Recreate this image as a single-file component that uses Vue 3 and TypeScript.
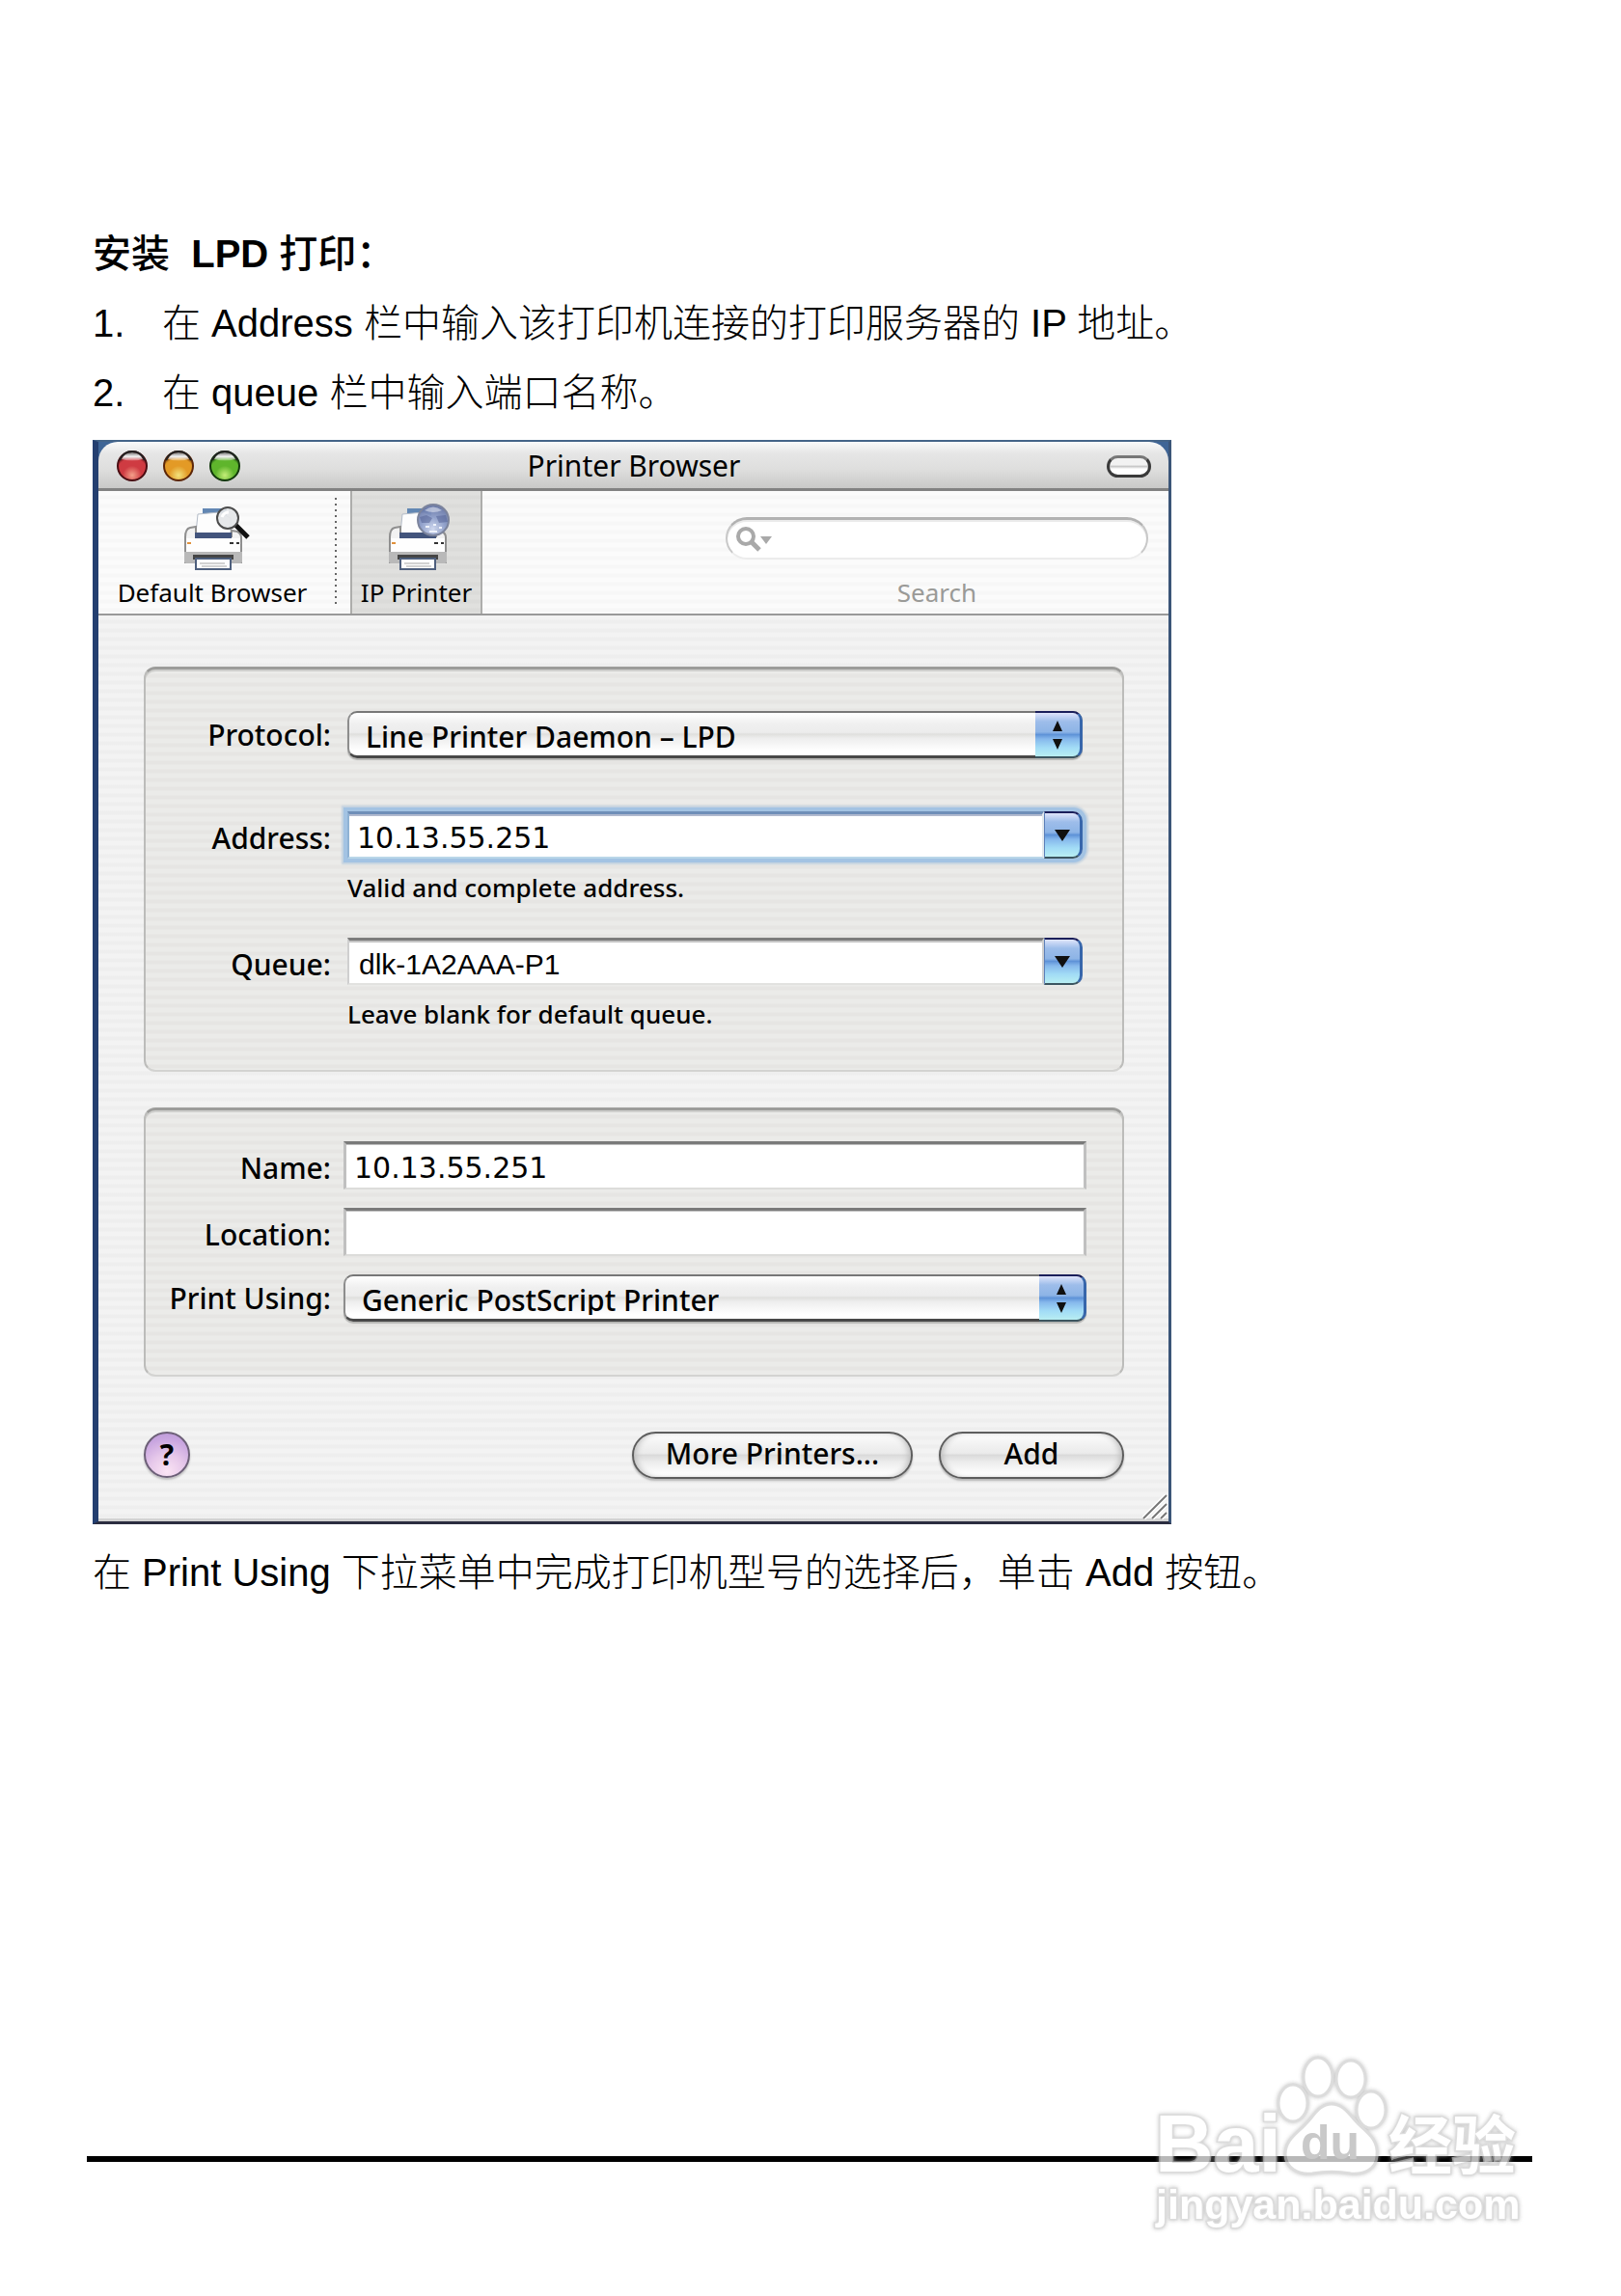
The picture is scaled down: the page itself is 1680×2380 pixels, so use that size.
<script setup lang="ts">
import { ref } from 'vue'

interface Light {
  name: string
  rim: string
  mid: string
  glow: string
}

const lights: Light[] = [
  { name: 'Close', rim: '#4a0d12', mid: '#cf3b42', glow: '#f4a08a' },
  { name: 'Minimize', rim: '#5c2608', mid: '#e39a26', glow: '#f2e27c' },
  { name: 'Zoom', rim: '#12380c', mid: '#5fb52c', glow: '#c4ee78' },
]

const steps: string[] = [
  '在 Address 栏中输入该打印机连接的打印服务器的 IP 地址。',
  '在 queue 栏中输入端口名称。',
]

const search = ref('')
const protocol = ref('lpd')
const address = ref('10.13.55.251')
const queue = ref('dlk-1A2AAA-P1')
const printerName = ref('10.13.55.251')
const location = ref('')
const driver = ref('generic')
</script>

<template>
  <main class="page">
    <h1 class="heading">安装&nbsp; <b>LPD</b> 打印：</h1>
    <ol class="steps">
      <li v-for="(step, i) in steps" :key="i">
        <span class="num">{{ i + 1 }}.</span>
        <span>{{ step }}</span>
      </li>
    </ol>

    <section class="window" aria-label="Printer Browser">
      <header class="titlebar">
        <div class="lights">
          <button v-for="(l, i) in lights" :key="l.name" type="button" class="light" :aria-label="l.name">
            <svg viewBox="0 0 32 32" width="32" height="32">
              <defs>
                <radialGradient :id="'lamp' + i" cx="50%" cy="82%" r="72%">
                  <stop offset="0" :stop-color="l.glow" />
                  <stop offset="0.45" :stop-color="l.mid" />
                  <stop offset="0.8" :stop-color="l.mid" />
                  <stop offset="1" :stop-color="l.rim" />
                </radialGradient>
                <linearGradient :id="'shine' + i" x1="0" y1="0" x2="0" y2="1">
                  <stop offset="0" stop-color="#777" />
                  <stop offset="0.5" stop-color="#f4f4f4" />
                  <stop offset="1" stop-color="#fff" stop-opacity="0.2" />
                </linearGradient>
              </defs>
              <circle cx="16" cy="16" r="15" :fill="`url(#lamp${i})`" :stroke="l.rim" stroke-width="2" />
              <path d="M5 9Q8 2 16 2T27 9Q16 12 5 9Z" :fill="`url(#shine${i})`" />
              <path d="M3 10Q7 1 16 1T29 10" fill="none" stroke="#222" stroke-width="2" />
            </svg>
          </button>
        </div>
        <h2 class="title">Printer Browser</h2>
        <button type="button" class="pill" aria-label="Toggle toolbar"></button>
      </header>

      <div class="toolbar">
        <button type="button" class="tool wide">
          <svg class="tool-icon" viewBox="0 0 70 71" width="70" height="71">
            <path d="M25 2H50V14H25Z" fill="#6287b3" />
            <path d="M20 8L42 6L54 12V28H18Z" fill="#fdfdfd" stroke="#b4bcc8" stroke-width="1" />
            <path d="M7 32Q7 23 12 22L18 21V31H55V25L61 26Q65 28 65 32V58H7Z" fill="#f2f2f2" stroke="#8f8f8f" stroke-width="2" />
            <path d="M17 27H55V33H17Z" fill="#42547c" />
            <path d="M8 33H64V47H8Z" fill="#fefefe" />
            <path d="M6 47H66V57Q66 59 63 59H9Q6 59 6 57Z" fill="#b9b9b9" />
            <path d="M15 50H57V55H15Z" fill="#454545" />
            <path d="M18 54H54V65H18Z" fill="#fdfdfd" stroke="#4e5f7d" stroke-width="2" />
            <path d="M22 59H48M24 62H50" stroke="#d2d2d2" stroke-width="2" />
            <path d="M9 38H13" stroke="#e0913c" stroke-width="2" />
            <path d="M53 38H57M60 38H63" stroke="#333" stroke-width="2" />
            <path d="M59 19L72 32" stroke="#111" stroke-width="5" />
            <circle cx="51" cy="12" r="11" fill="#e4e6e8" fill-opacity="0.92" stroke="#4c4c4c" stroke-width="2" />
            <path d="M45 11Q47 6 52 6" fill="none" stroke="#fff" stroke-width="3" />
          </svg>
          <span>Default Browser</span>
        </button>
        <span class="divider"></span>
        <button type="button" class="tool active" aria-pressed="true">
          <svg class="tool-icon" viewBox="0 0 70 71" width="70" height="71">
            <defs>
              <radialGradient id="globe" cx="50%" cy="80%" r="80%">
                <stop offset="0" stop-color="#cdd6ee" />
                <stop offset="0.5" stop-color="#8a9bc8" />
                <stop offset="1" stop-color="#5f6e9f" />
              </radialGradient>
            </defs>
            <path d="M25 2H50V14H25Z" fill="#6287b3" />
            <path d="M20 8L42 6L54 12V28H18Z" fill="#fdfdfd" stroke="#b4bcc8" stroke-width="1" />
            <path d="M7 32Q7 23 12 22L18 21V31H55V25L61 26Q65 28 65 32V58H7Z" fill="#f2f2f2" stroke="#8f8f8f" stroke-width="2" />
            <path d="M17 27H55V33H17Z" fill="#42547c" />
            <path d="M8 33H64V47H8Z" fill="#fefefe" />
            <path d="M6 47H66V57Q66 59 63 59H9Q6 59 6 57Z" fill="#b9b9b9" />
            <path d="M15 50H57V55H15Z" fill="#454545" />
            <path d="M18 54H54V65H18Z" fill="#fdfdfd" stroke="#4e5f7d" stroke-width="2" />
            <path d="M22 59H48M24 62H50" stroke="#d2d2d2" stroke-width="2" />
            <path d="M9 38H13" stroke="#e0913c" stroke-width="2" />
            <path d="M53 38H57M60 38H63" stroke="#333" stroke-width="2" />
            <circle cx="52" cy="14" r="16" fill="url(#globe)" fill-opacity="0.92" stroke="#7c849c" stroke-width="2" />
            <path d="M38 11L45 9L51 12L48 17L40 17ZM55 10L65 9L67 16L58 17Z" fill="#4f5e92" fill-opacity="0.5" />
            <path d="M43 4Q52 -3 61 4Q52 8 43 4Z" fill="#dde2f0" fill-opacity="0.6" />
            <path d="M44 21H48M52 19H55M58 22H61M48 26H56" stroke="#eef2fb" stroke-width="2" />
          </svg>
          <span>IP Printer</span>
        </button>
        <div class="search">
          <div class="search-box">
            <svg viewBox="0 0 40 28" width="40" height="28">
              <circle cx="10" cy="11" r="8" fill="none" stroke="#a9a9a9" stroke-width="4" />
              <path d="M16 17L24 25" stroke="#a9a9a9" stroke-width="5" />
              <path d="M25 11H37L31 19Z" fill="#a9a9a9" />
            </svg>
            <input id="search" v-model="search" type="text" />
          </div>
          <label for="search">Search</label>
        </div>
      </div>

      <form class="body" @submit.prevent>
        <div class="group connection">
          <div class="row">
            <label for="protocol">Protocol:</label>
            <div class="select">
              <select id="protocol" v-model="protocol">
                <option value="lpd">Line Printer Daemon – LPD</option>
              </select>
              <span class="cap">
                <svg viewBox="0 0 14 30" width="14" height="30"><path d="M7 0L12 11H2ZM2 19H12L7 30Z" fill="#101010" /></svg>
              </span>
            </div>
          </div>
          <div class="row combo-row first">
            <label for="address">Address:</label>
            <div class="combo focused">
              <input id="address" v-model="address" type="text" />
              <button type="button" class="cap" aria-label="Show addresses">
                <svg viewBox="0 0 16 12" width="16" height="12"><path d="M0 0H16L8 12Z" fill="#101010" /></svg>
              </button>
            </div>
            <p class="hint">Valid and complete address.</p>
          </div>
          <div class="row combo-row">
            <label for="queue">Queue:</label>
            <div class="combo">
              <input id="queue" v-model="queue" class="plain" type="text" />
              <button type="button" class="cap" aria-label="Show queues">
                <svg viewBox="0 0 16 12" width="16" height="12"><path d="M0 0H16L8 12Z" fill="#101010" /></svg>
              </button>
            </div>
            <p class="hint">Leave blank for default queue.</p>
          </div>
        </div>

        <div class="group details">
          <div class="row text-row">
            <label for="name">Name:</label>
            <input id="name" v-model="printerName" class="field" type="text" />
          </div>
          <div class="row text-row">
            <label for="location">Location:</label>
            <input id="location" v-model="location" class="field" type="text" />
          </div>
          <div class="row">
            <label for="driver">Print Using:</label>
            <div class="select">
              <select id="driver" v-model="driver">
                <option value="generic">Generic PostScript Printer</option>
              </select>
              <span class="cap">
                <svg viewBox="0 0 14 30" width="14" height="30"><path d="M7 0L12 11H2ZM2 19H12L7 30Z" fill="#101010" /></svg>
              </span>
            </div>
          </div>
        </div>

        <div class="actions">
          <button type="button" class="help">?</button>
          <button type="button" class="push more">More Printers...</button>
          <button type="submit" class="push add">Add</button>
        </div>
      </form>
      <svg class="grip" viewBox="0 0 26 26" width="26" height="26">
        <path d="M1 25L25 1M10 25L25 10M19 25L25 19" stroke="#fff" stroke-width="5" />
        <path d="M1 25L25 1M10 25L25 10M19 25L25 19" stroke="#777" stroke-width="2" />
      </svg>
    </section>

    <p class="after">在 Print Using 下拉菜单中完成打印机型号的选择后，单击 Add 按钮。</p>

    <footer class="footer">
      <svg class="watermark" viewBox="0 0 410 200" width="410" height="200">
        <g class="mark">
          <text x="7" y="131" class="latin">Bai</text>
          <ellipse cx="150" cy="60" rx="15" ry="19" />
          <ellipse cx="176" cy="33" rx="15" ry="20" />
          <ellipse cx="210" cy="35" rx="15" ry="19" />
          <ellipse cx="231" cy="67" rx="15" ry="19" />
          <path d="M190 61C203 61 209 73 218 82C228 91 239 99 237 115C236 130 222 134 210 133C198 131 182 131 170 133C156 135 142 127 142 113C142 98 155 91 163 82C172 73 177 61 190 61Z" />
          <text x="249" y="128" class="han">经验</text>
          <text x="8" y="180" class="url">jingyan.baidu.com</text>
        </g>
        <text x="158" y="118" class="du">du</text>
      </svg>
    </footer>
  </main>
</template>

<style>
body {
  margin: 0;
  background: #fff;
}
</style>

<style scoped>
* {
  box-sizing: border-box;
}

.page {
  display: flex;
  flex-direction: column;
  min-height: 100vh;
  padding: 227px 92px 139px 90px;
  color: #000;
  font-family: "Liberation Sans", "Noto Sans CJK SC", sans-serif;
  font-size: 40px;
  line-height: 72px;
}

.heading,
.steps,
.after {
  margin: 0 0 0 6px;
  padding: 0;
  font-size: 40px;
  font-weight: 300;
}

.heading {
  font-weight: 500;
}

.heading b {
  font-weight: 700;
}

.steps {
  list-style: none;
}

.steps li {
  display: flex;
}

.num {
  flex: 0 0 72px;
}

.window {
  position: relative;
  width: 100%;
  max-width: 1118px;
  margin: 13px 0 14px 6px;
  border-style: solid;
  border-width: 2px 3px 3px 6px;
  border-color: #446488 #3b5578 #2b2d40 #243f70;
  background: #3f6596;
  font-family: "Noto Sans", "Open Sans", sans-serif;
  font-size: 30px;
}

button,
input,
select {
  margin: 0;
  padding: 0;
  border: 0;
  background: none;
  color: #000;
  font: inherit;
  outline: none;
}

.titlebar {
  display: grid;
  grid-template-columns: 1fr auto 1fr;
  align-items: center;
  height: 51px;
  padding: 2px 18px 0 19px;
  border-bottom: 3px solid #828282;
  border-radius: 20px 20px 0 0;
  background: linear-gradient(#fafafa, #e6e6e6 25%, #dededd 60%, #c9c9c8);
}

.lights {
  display: flex;
  gap: 16px;
}

.light {
  width: 32px;
  height: 32px;
  border-radius: 50%;
}

.light svg {
  display: block;
}

.title {
  margin: 0;
  font-size: 30px;
  font-weight: 400;
  line-height: 46px;
}

.pill {
  justify-self: end;
  width: 46px;
  height: 23px;
  border: 3px solid #3a3a3a;
  border-top-color: #777;
  border-radius: 12px;
  background: linear-gradient(#f2f2f2 40%, #c8c8c8 50%, #fff 65%);
}

.toolbar {
  display: flex;
  height: 129px;
  border-bottom: 2px solid #999;
  background: repeating-linear-gradient(#fbfbfb 0, #fbfbfb 4px, #f7f7f7 5px, #f7f7f7 8px, #fbfbfb 9px);
  font-size: 26px;
  line-height: 36px;
}

.tool {
  display: flex;
  flex-direction: column;
  align-items: center;
  padding: 16px 0 4px;
  white-space: nowrap;
}

.tool.wide {
  width: 236px;
}

.tool.active {
  width: 137px;
  border: solid #adadab;
  border-width: 0 2px;
  background: repeating-linear-gradient(#e0e0de 0, #e0e0de 4px, #dbdbd9 5px, #dbdbd9 8px, #e0e0de 9px);
}

.tool-icon {
  display: block;
  overflow: visible;
}

.divider {
  width: 2px;
  margin: 7px 14px 6px 9px;
  background: repeating-linear-gradient(#666 0, #666 2px, transparent 2px, transparent 6px);
}

.search {
  width: 438px;
  margin: 27px 21px 0 auto;
  color: #9a9a97;
  text-align: center;
}

.search-box {
  display: flex;
  align-items: center;
  height: 44px;
  margin-bottom: 16px;
  padding: 0 16px 0 9px;
  border: 2px solid #c8c8c8;
  border-top: 3px solid #b2b2b2;
  border-bottom-color: #ececec;
  border-radius: 22px;
  background: #fff;
  box-shadow: inset 0 2px 0 #ebebeb;
}

.search-box input {
  flex: 1;
  min-width: 0;
}

.search label {
  display: block;
}

.body {
  padding: 53px 46px 41px 47px;
  border-bottom: 3px solid #d2d2d2;
  background: repeating-linear-gradient(#f3f3f3 0, #f3f3f3 4px, #eeeeee 5px, #eeeeee 8px, #f3f3f3 9px);
  font-weight: 500;
  line-height: 49px;
}

.group {
  border: 2px solid #bcbcba;
  border-top: 3px solid #9c9c9a;
  border-bottom-color: #d3d3d1;
  border-radius: 12px;
  background: repeating-linear-gradient(#ebebe9 0, #ebebe9 4px, #e6e5e3 5px, #e6e5e3 8px, #ebebe9 9px);
  box-shadow: inset 0 2px 0 #cfcfcd;
}

.connection {
  padding: 43px 41px 40px 0;
}

.details {
  display: grid;
  gap: 19px;
  margin-top: 37px;
  padding: 32px 37px 55px 0;
}

.row {
  display: grid;
  grid-template-columns: 192px 1fr;
  column-gap: 17px;
}

.details .row {
  column-gap: 13px;
}

.row label {
  text-align: right;
  white-space: nowrap;
}

.combo-row label,
.text-row label {
  padding-top: 3px;
}

.combo-row label {
  height: 49px;
}

.text-row label {
  height: 50px;
}

.combo-row.first {
  margin: 55px 0 34px;
}

.hint {
  grid-column: 2;
  margin: 13px 0 0;
  font-size: 26px;
  line-height: 35px;
}

.select {
  position: relative;
  height: 49px;
}

.select select {
  display: block;
  width: 100%;
  height: 49px;
  padding: 0 60px 4px 17px;
  appearance: none;
  border: 2px solid #8d8d8d;
  border-top-color: #777;
  border-bottom: 3px solid #484848;
  border-radius: 10px;
  background: linear-gradient(#fff, #f0f0f0 25%, #ececec 46%, #dfdfdd 50%, #eeeeee 60%, #fff 90%);
  box-shadow: 0 2px 1px #b5b5b3;
}

.cap {
  display: grid;
  place-items: center;
  border: solid #3766ab;
  border-width: 2px 3px 2px 0;
  border-top-color: #1b1f5a;
  border-bottom-color: #3c5560;
  border-radius: 0 10px 10px 0;
  background: linear-gradient(#dfe4fa, #9dbdea 20%, #8db4e6 44%, #5f93d8 50%, #86b8ec 60%, #a2dcf6 80%, #b8eef2);
}

.select .cap {
  position: absolute;
  top: 0;
  right: 0;
  width: 49px;
  height: 49px;
  pointer-events: none;
}

.combo {
  display: flex;
  height: 49px;
  border-radius: 0 10px 10px 0;
}

.combo input {
  flex: 1;
  min-width: 0;
  padding: 4px 8px 0;
  border: 2px solid #cfcfcf;
  border-top: 3px solid #7c7c7c;
  border-bottom-color: #e2e2e0;
  background: #fff;
  box-shadow: inset 0 2px 0 #c4c4c4;
}

.combo .cap {
  flex: 0 0 40px;
  border-left: 1px solid #5c7fb8;
}

.focused {
  box-shadow: 0 0 0 4px #a3c3e3, 0 0 2px 6px #c3d2e0;
}

.focused input {
  border-color: #6f8fb8 #e4eaee #b9d6e8 #8fb2d4;
  box-shadow: inset 0 2px 0 #b0b9cf;
}

#address,
#name {
  font-family: "DejaVu Sans", sans-serif;
  font-size: 30px;
  font-weight: 400;
}

.combo .plain {
  padding-left: 10px;
  font-family: "Liberation Sans", sans-serif;
  font-weight: 400;
}

.field {
  width: 100%;
  height: 50px;
  padding: 3px 8px 0;
  border: 3px solid #c0c0c0;
  border-top-color: #7a7a7a;
  border-bottom: 2px solid #dcdcda;
  background: #fff;
  box-shadow: inset 0 1px 0 #c0c0c0;
}

.actions {
  display: flex;
  gap: 27px;
  margin-top: 57px;
}

.help {
  width: 48px;
  height: 48px;
  margin-right: auto;
  border: 2px solid #6d6078;
  border-radius: 50%;
  background: radial-gradient(circle at 50% 90%, #fbe4f4 0, #e6c8ea 40%, #c9a6e0 75%, #b795d4);
  box-shadow: 0 2px 2px #c0c0c0;
  font-weight: 700;
  line-height: 44px;
}

.push {
  height: 49px;
  padding-bottom: 4px;
  border: 2px solid #5d5d5d;
  border-radius: 25px;
  background: linear-gradient(#fdfdfd, #f0f0f0 30%, #ebebeb 45%, #dadada 50%, #ececec 65%, #fff 95%);
  box-shadow: 0 2px 2px #b5b5b5, inset 5px 0 6px -3px #bbb, inset -5px 0 6px -3px #bbb;
  line-height: 41px;
}

.more {
  width: 291px;
}

.add {
  width: 192px;
}

.grip {
  position: absolute;
  right: 1px;
  bottom: 2px;
}

.footer {
  position: relative;
  height: 6px;
  margin-top: auto;
  background: #000;
}

.watermark {
  position: absolute;
  right: -12px;
  bottom: -79px;
  font-family: "Liberation Sans", "Noto Sans CJK SC", sans-serif;
  font-weight: 700;
}

.mark {
  fill: #fff;
  stroke: #cfcfcf;
  stroke-width: 3px;
  opacity: 0.72;
  filter: drop-shadow(0 0 2px #aaa);
}

.mark text {
  paint-order: stroke;
}

.latin {
  font-size: 84px;
}

.han {
  font-family: "Noto Sans CJK SC", sans-serif;
  font-size: 66px;
}

.url {
  font-size: 43px;
}

.du {
  fill: #c9c9c9;
  font-size: 50px;
}
</style>
